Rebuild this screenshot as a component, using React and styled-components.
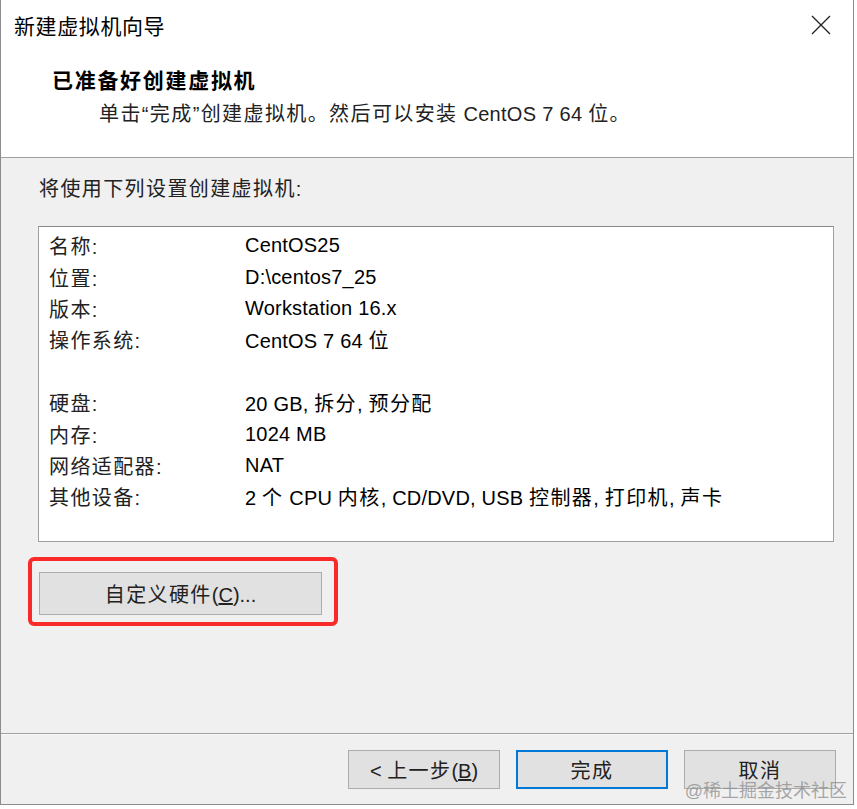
import React from 'react';
import styled, { createGlobalStyle } from 'styled-components';

const GlobalStyle = createGlobalStyle`
    html, body {
        margin: 0;
        padding: 0;
        background: #ffffff;
    }
    body {
        font-family: "Liberation Sans", "Noto Sans CJK SC", sans-serif;
        color: #1a1a1a;
    }
`;

const settings = [
    { label: '名称:', value: 'CentOS25' },
    { label: '位置:', value: 'D:\\centos7_25' },
    { label: '版本:', value: 'Workstation 16.x' },
    { label: '操作系统:', value: 'CentOS 7 64 位' },
    { label: '', value: '' },
    { label: '硬盘:', value: '20 GB, 拆分, 预分配' },
    { label: '内存:', value: '1024 MB' },
    { label: '网络适配器:', value: 'NAT' },
    { label: '其他设备:', value: '2 个 CPU 内核, CD/DVD, USB 控制器, 打印机, 声卡' },
];

// wraps the Chinese runs so they get the wider Windows-style spacing
const cjkRun = /([\u3000-\u303f\u4e00-\u9fff\uff00-\uffef“”]+)/;

const Mixed = ({ text }) => (
    <>
        {text.split(cjkRun).map((part, i) =>
            cjkRun.test(part) ? <Han key={i}>{part}</Han> : part
        )}
    </>
);

const CloseIcon = () => (
    <svg width="20" height="20" viewBox="0 0 20 20">
        <path d="M1 1 L19 19 M19 1 L1 19" stroke="#222" strokeWidth="1.3" fill="none" />
    </svg>
);

const App = () => {
    return (
        <>
            <GlobalStyle />
            <Window>
                <TitleBar>
                    <Title>新建虚拟机向导</Title>
                    <CloseButton><CloseIcon /></CloseButton>
                </TitleBar>
                <Header>
                    <Heading>已准备好创建虚拟机</Heading>
                    <Subtitle><Mixed text="单击“完成”创建虚拟机。然后可以安装 CentOS 7 64 位。" /></Subtitle>
                </Header>
                <Body>
                    <Intro><Mixed text="将使用下列设置创建虚拟机" />:</Intro>
                    <SummaryBox>
                        {settings.map((row, i) => (
                            <SummaryRow key={i}>
                                <RowLabel><Mixed text={row.label} /></RowLabel>
                                <RowValue><Mixed text={row.value} /></RowValue>
                            </SummaryRow>
                        ))}
                    </SummaryBox>
                    <Highlight>
                        <WideButton><Han>自定义硬件</Han>(<u>C</u>)...</WideButton>
                    </Highlight>
                </Body>
                <Footer>
                    <DialogButton>&lt; <Han>上一步</Han>(<u>B</u>)</DialogButton>
                    <DialogButton primary><Han>完成</Han></DialogButton>
                    <DialogButton><Han>取消</Han></DialogButton>
                    <Watermark>@稀土掘金技术社区</Watermark>
                </Footer>
            </Window>
        </>
    );
};

// Styling: Styled components

const Han = styled.span`
    letter-spacing: 1.4px;
`;

const Window = styled.div`
    width: 854px;
    height: 805px;
    display: flex;
    flex-direction: column;
    border-left: 1px solid #8c8c8c;
    border-right: 1px solid #8c8c8c;
    border-bottom: 1px solid #8c8c8c;
    background: #f0f0f0;
    box-sizing: border-box;
`;

const TitleBar = styled.div`
    height: 50px;
    display: flex;
    align-items: center;
    justify-content: space-between;
    padding: 0 22px 0 13px;
    background: #ffffff;
`;

const Title = styled.div`
    font-size: 21px;
    letter-spacing: 0.6px;
    color: #000;
`;

const CloseButton = styled.div`
    width: 20px;
    height: 20px;
    display: flex;
`;

const Header = styled.div`
    height: 108px;
    box-sizing: border-box;
    padding: 18px 0 0 51px;
    background: #ffffff;
    border-bottom: 1px solid #a0a0a0;
`;

const Heading = styled.div`
    font-size: 21px;
    font-weight: bold;
    letter-spacing: 1.7px;
    line-height: 26px;
    color: #000;
`;

const Subtitle = styled.div`
    margin: 7px 0 0 47px;
    font-size: 20px;
    letter-spacing: 0.3px;
    line-height: 26px;
    color: #222;
`;

const Body = styled.div`
    flex: 1;
    padding: 18px 0 0 37px;
`;

const Intro = styled.div`
    font-size: 20px;
    line-height: 26px;
    padding-left: 1px;
    color: #222;
`;

const SummaryBox = styled.div`
    margin-top: 24px;
    width: 796px;
    height: 316px;
    box-sizing: border-box;
    padding: 3px 0 0 10px;
    background: #ffffff;
    border: 1px solid #a0a0a0;
    border-top-color: #8a8a8a;
`;

const SummaryRow = styled.div`
    display: flex;
    height: 31.4px;
    align-items: center;
    font-size: 20px;
`;

const RowLabel = styled.div`
    width: 196px;
    flex-shrink: 0;
    color: #222;
`;

const RowValue = styled.div`
    color: #000;
    letter-spacing: 0.2px;
    white-space: nowrap;
`;

const Highlight = styled.div`
    position: relative;
    display: inline-block;
    margin-top: 30px;
    margin-left: 1px;

    &::after {
        content: "";
        position: absolute;
        left: -11px;
        top: -15px;
        right: -16px;
        bottom: -11px;
        border: 4px solid #fb2a2a;
        border-radius: 6px;
        pointer-events: none;
    }
`;

const WideButton = styled.button`
    width: 283px;
    height: 43px;
    font-family: inherit;
    font-size: 20px;
    color: #222;
    background: #e1e1e1;
    border: 1px solid #adadad;
    padding: 0;
`;

const Footer = styled.div`
    position: relative;
    height: 71px;
    box-sizing: border-box;
    display: flex;
    justify-content: flex-end;
    align-items: flex-start;
    gap: 16px;
    padding: 16px 17px 0 0;
    border-top: 1px solid #a0a0a0;
    box-shadow: inset 0 1px 0 #fafafa;
`;

const DialogButton = styled.button`
    width: 152px;
    height: 39px;
    box-sizing: border-box;
    font-family: inherit;
    font-size: 20px;
    color: #222;
    background: #e1e1e1;
    border: ${p => (p.primary ? '2px solid #0078d7' : '1px solid #adadad')};
    padding: 0;
`;

const Watermark = styled.div`
    position: absolute;
    right: 6px;
    bottom: 2px;
    font-size: 18px;
    color: rgba(140, 140, 140, 0.75);
    pointer-events: none;
`;

export default App;
